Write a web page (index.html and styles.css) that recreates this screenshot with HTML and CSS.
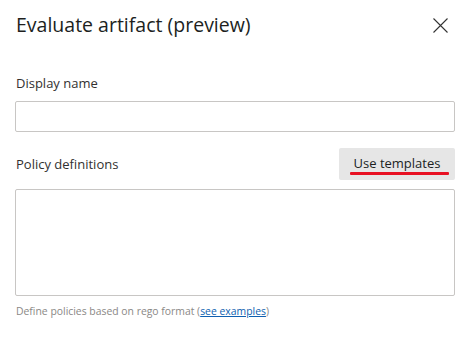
FILE: index.html
```html
<!DOCTYPE html>
<html>
<head>
<meta charset="utf-8">
<link rel="stylesheet" href="styles.css">
</head>
<body>
<div class="panel">
  <div class="header">
    <h1 class="title">Evaluate artifact (preview)</h1>
    <button class="close" aria-label="Close">
      <svg width="15" height="15" viewBox="0 0 15 15"><path d="M0.5 0.5L14.5 14.5M14.5 0.5L0.5 14.5" stroke="#333" stroke-width="1.1" fill="none"/></svg>
    </button>
  </div>
  <div class="field">
    <label class="label">Display name</label>
    <div class="input"></div>
  </div>
  <div class="field field-policy">
    <div class="row">
      <label class="label">Policy definitions</label>
      <button class="btn"><span class="btn-text">Use templates</span><span class="mark"></span></button>
    </div>
    <div class="textarea"></div>
    <p class="help">Define policies based on rego format (<a class="link" href="#">see examples</a>)</p>
  </div>
</div>
</body>
</html>
```
FILE: styles.css
```css
* { box-sizing: border-box; }
html, body { margin: 0; padding: 0; background: #fff; }
body { font-family: "Open Sans", "Noto Sans", sans-serif; color: #323130; }
.panel { width: 464px; height: 347px; padding: 0 9px 0 15px; }
.header { height: 50px; display: flex; align-items: center; justify-content: space-between; }
.title { margin: 0 0 0 1px; font-size: 19.5px; font-weight: 400; color: #201f1e; line-height: 26px; }
.close { border: 0; background: none; padding: 0; margin-right: 7px; width: 15px; height: 15px; display: flex; }
.field { margin-top: 24px; }
.label { display: block; font-size: 13px; line-height: 18px; color: #323130; margin-left: 1px; }
.input { margin-top: 9px; height: 31px; border: 1px solid #c8c6c4; border-radius: 2px; }
.field-policy { margin-top: 16px; }
.row { display: flex; justify-content: space-between; align-items: center; }
.btn { position: relative; width: 116px; height: 32px; border: 0; border-radius: 2px; background: #e6e6e6; font-family: inherit; font-size: 13px; color: #201f1e; padding: 0; }
.btn-text { position: relative; top: -1px; }
.mark { position: absolute; left: 11px; right: 6px; top: 24px; height: 3px; background: #e81123; border-radius: 1px; }
.textarea { margin-top: 9px; height: 107px; border: 1px solid #c8c6c4; border-radius: 2px; }
.help { margin: 8px 0 0 1px; font-size: 10.4px; line-height: 14px; color: #8a8886; }
.link { color: #0f5fb0; }
```
